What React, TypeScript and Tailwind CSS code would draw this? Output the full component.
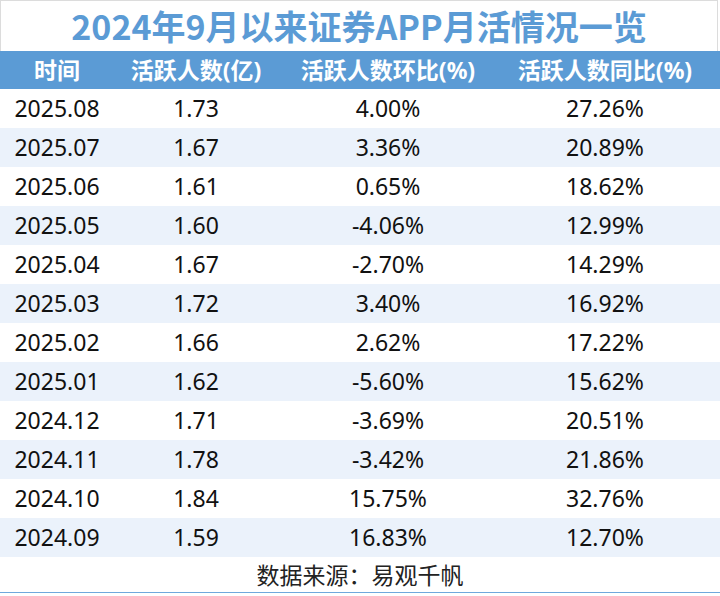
import React from "react";

const rows: [string, string, string, string][] = [
  ["2025.08", "1.73", "4.00%", "27.26%"],
  ["2025.07", "1.67", "3.36%", "20.89%"],
  ["2025.06", "1.61", "0.65%", "18.62%"],
  ["2025.05", "1.60", "-4.06%", "12.99%"],
  ["2025.04", "1.67", "-2.70%", "14.29%"],
  ["2025.03", "1.72", "3.40%", "16.92%"],
  ["2025.02", "1.66", "2.62%", "17.22%"],
  ["2025.01", "1.62", "-5.60%", "15.62%"],
  ["2024.12", "1.71", "-3.69%", "20.51%"],
  ["2024.11", "1.78", "-3.42%", "21.86%"],
  ["2024.10", "1.84", "15.75%", "32.76%"],
  ["2024.09", "1.59", "16.83%", "12.70%"],
];

const cjk = { fontFamily: '"Noto Sans CJK SC", "Noto Sans", sans-serif' };
const mixed = { fontFamily: '"Noto Sans", "Noto Sans CJK SC", sans-serif' };

export default function App() {
  return (
    <div className="w-[720px] h-[596px] bg-white flex flex-col" style={cjk}>
      <div className="h-[51px] w-[718px] border-t border-l border-r border-[#dcdcdc] flex items-center justify-center">
        <span className="text-[34px] font-bold text-[#5b9bd5] leading-none">
          2024年9月以来证券APP月活情况一览
        </span>
      </div>
      <div
        className="grid grid-cols-[114px_164px_220px_222px] h-[38px] bg-[#5b9bd5] text-white font-bold text-[23px] items-center"
        style={mixed}
      >
        <div className="text-center">时间</div>
        <div className="text-center">活跃人数(亿)</div>
        <div className="text-center">活跃人数环比(%)</div>
        <div className="text-center pr-[8px]">活跃人数同比(%)</div>
      </div>
      {rows.map((r, i) => (
        <div
          key={r[0]}
          style={mixed}
          className={
            "grid grid-cols-[114px_164px_220px_222px] h-[39px] items-center text-[23px] text-[#111] " +
            (i % 2 === 1 ? "bg-[#ebf2fb]" : "bg-white")
          }
        >
          <div className="text-center">{r[0]}</div>
          <div className="text-center">{r[1]}</div>
          <div className="text-center">{r[2]}</div>
          <div className="text-center pr-[8px]">{r[3]}</div>
        </div>
      ))}
      <div className="h-[36px] flex items-center justify-center text-[23px] text-[#222] border-b border-[#6fa8dc]">
        数据来源：易观千帆
      </div>
    </div>
  );
}
